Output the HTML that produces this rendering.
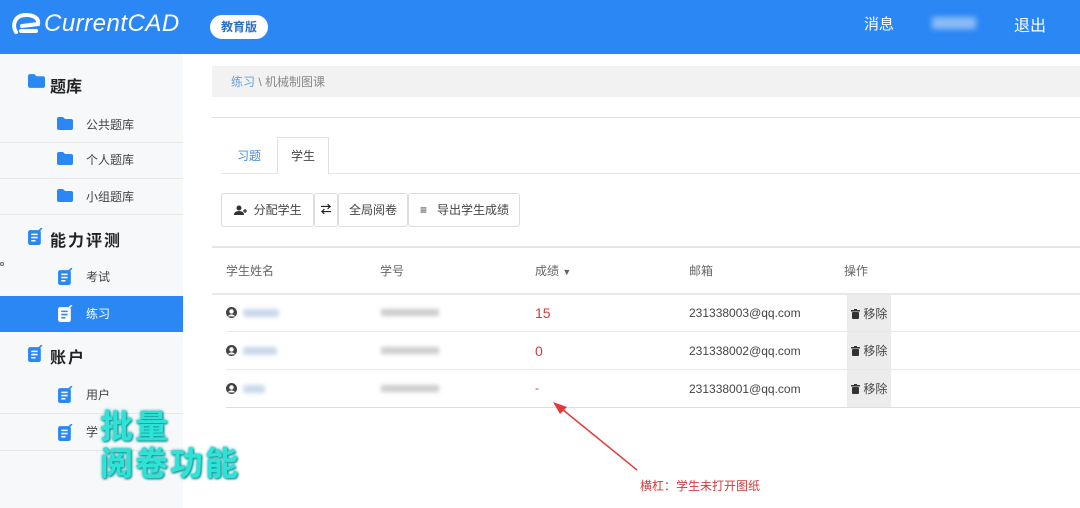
<!DOCTYPE html>
<html><head><meta charset="utf-8"><style>
*{margin:0;padding:0;box-sizing:border-box}
body{width:1080px;height:508px;overflow:hidden;background:#fff;font-family:"Liberation Sans","Noto Sans CJK SC",sans-serif;position:relative;color:#555}
.a{position:absolute;white-space:nowrap}
.hdr{position:absolute;left:0;top:0;width:1080px;height:54px;background:#2a87f4}
.side{position:absolute;left:0;top:54px;width:183px;height:454px;background:#f7f8fa}
.sh{font-size:16px;font-weight:bold;color:#222}
.si{font-size:12px;color:#444}
.ln{position:absolute;height:1px;background:#e8e8e8}
.btn{position:absolute;top:193px;height:34px;border:1px solid #ddd;border-radius:3px;font-size:12px;color:#444;line-height:32px;background:#fff}
.th{font-size:12px;color:#666}
.td{font-size:12px;color:#444}
.blur{position:absolute;height:8px;background:#c8d8ea;filter:blur(2px);border-radius:3px}
.gblur{position:absolute;height:7px;width:58px;background:#ccc;filter:blur(2px)}
.rm{position:absolute;left:847px;width:44px;height:38px;background:#ececec;font-size:12px;color:#444;line-height:38px;padding-left:4px}
.big{font-size:33px;font-weight:bold;color:#2ee3d6;text-shadow:0 0 3px #0aa,1px 1px 2px #077;letter-spacing:2px}
</style></head><body>
<div class="hdr"></div>
<svg class="a" style="left:12px;top:12px" width="30" height="24" viewBox="0 0 30 24"><path d="M4 20 C0 14 2 3 14 3 C24 3 27 8 26 12 L10 14 M9 19 L24 19" stroke="#fff" stroke-width="4" fill="none" stroke-linecap="round"/></svg>
<div class="a" style="left:44px;top:10px;font-size:24px;color:#fff;font-style:italic;letter-spacing:0.5px">CurrentCAD</div>
<div class="a" style="left:210px;top:15px;width:58px;height:24px;border-radius:12px;background:#fff;color:#2a6fc0;font-size:12px;font-weight:bold;text-align:center;line-height:24px">教育版</div>
<div class="a" style="left:864px;top:13px;font-size:15px;color:#fff">消息</div>
<div class="a" style="left:932px;top:17px;width:44px;height:12px;background:#8cbcf5;filter:blur(3px)"></div>
<div class="a" style="left:1014px;top:12px;font-size:16px;color:#fff">退出</div>

<div class="side"></div>
<div class="ln" style="left:0;top:142px;width:183px"></div>
<div class="ln" style="left:0;top:178px;width:183px"></div>
<div class="ln" style="left:0;top:214px;width:183px"></div>
<div class="ln" style="left:0;top:413px;width:183px"></div>
<div class="ln" style="left:0;top:450px;width:183px"></div>
<div class="a" style="left:0;top:296px;width:183px;height:36px;background:#2a87f4"></div>
<svg width="0" height="0" style="position:absolute"><defs>
<symbol id="fd" viewBox="0 0 16 13"><path d="M0 2 Q0 0 2 0 L6 0 L8 2 L14 2 Q16 2 16 4 L16 11 Q16 13 14 13 L2 13 Q0 13 0 11Z" fill="#2a87f4"/></symbol>
<symbol id="dc" viewBox="0 0 14 16"><rect x="0" y="2" width="12" height="14" rx="2" fill="#2a87f4"/><path d="M3 6h6M3 9h6M3 12h4" stroke="#fff" stroke-width="1.5"/><path d="M10 3 L13 0" stroke="#2a87f4" stroke-width="1.5"/></symbol>
<symbol id="dw" viewBox="0 0 14 16"><rect x="0" y="2" width="12" height="14" rx="2" fill="#fff"/><path d="M3 6h6M3 9h6M3 12h4" stroke="#2a87f4" stroke-width="1.5"/><path d="M10 3 L13 0" stroke="#fff" stroke-width="1.5"/></symbol>
<symbol id="av" viewBox="0 0 10 10"><circle cx="5" cy="5" r="5" fill="#444"/><circle cx="5" cy="4" r="2" fill="#fff"/><path d="M1.5 8.5 Q5 5 8.5 8.5" fill="#fff"/></symbol>
<symbol id="tr" viewBox="0 0 9 10"><rect x="0" y="1" width="9" height="1.5" fill="#333"/><rect x="3" y="0" width="3" height="1.5" fill="#333"/><rect x="1" y="3" width="7" height="7" rx="1" fill="#333"/></symbol>
</defs></svg>
<svg class="a" style="left:28px;top:74px;" width="17" height="14"><use href="#fd"/></svg>
<div class="a sh" style="left:50px;top:73px">题库</div>
<svg class="a" style="left:57px;top:117px" width="16" height="13"><use href="#fd"/></svg>
<div class="a si" style="left:86px;top:116px">公共题库</div>
<svg class="a" style="left:57px;top:152px" width="16" height="13"><use href="#fd"/></svg>
<div class="a si" style="left:86px;top:151px">个人题库</div>
<svg class="a" style="left:57px;top:189px" width="16" height="13"><use href="#fd"/></svg>
<div class="a si" style="left:86px;top:188px">小组题库</div>
<svg class="a" style="left:28px;top:228px" width="15" height="17"><use href="#dc"/></svg>
<div class="a sh" style="left:50px;top:227px;letter-spacing:2px">能力评测</div>
<div class="a" style="left:0;top:262px;width:4px;height:4px;border:1px solid #666;border-radius:50%"></div>
<svg class="a" style="left:58px;top:268px" width="15" height="17"><use href="#dc"/></svg>
<div class="a si" style="left:86px;top:268px">考试</div>
<svg class="a" style="left:58px;top:305px" width="15" height="17"><use href="#dw"/></svg>
<div class="a si" style="left:86px;top:305px;color:#fff">练习</div>
<svg class="a" style="left:28px;top:345px" width="15" height="17"><use href="#dc"/></svg>
<div class="a sh" style="left:50px;top:344px;letter-spacing:2px">账户</div>
<svg class="a" style="left:58px;top:386px" width="15" height="17"><use href="#dc"/></svg>
<div class="a si" style="left:86px;top:386px">用户</div>
<svg class="a" style="left:58px;top:424px" width="15" height="17"><use href="#dc"/></svg>
<div class="a si" style="left:86px;top:423px">学</div>
<div class="a big" style="left:100px;top:400px">批量</div>
<div class="a big" style="left:100px;top:437px">阅卷功能</div>

<div class="a" style="left:212px;top:66px;width:868px;height:31px;background:#f2f2f2"></div>
<div class="a" style="left:231px;top:73px;font-size:12px;color:#888"><span style="color:#6a9fd4">练习</span> \ 机械制图课</div>
<div class="ln" style="left:212px;top:117px;width:868px;background:#e0e0e0"></div>
<div class="ln" style="left:221px;top:173px;width:859px;background:#e6e6e6"></div>
<div class="a" style="left:237px;top:147px;font-size:12px;color:#4a8bd0">习题</div>
<div class="a" style="left:277px;top:137px;width:52px;height:37px;border:1px solid #e0e0e0;border-bottom:none;background:#fff;font-size:12px;color:#444;text-align:center;line-height:36px">学生</div>
<div class="btn" style="left:221px;width:93px;padding-left:12px">
<svg width="13" height="10" style="vertical-align:-1px"><circle cx="5" cy="3" r="2.5" fill="#333"/><path d="M0 10 Q0 6 5 6 Q10 6 10 10Z" fill="#333"/><path d="M9 6h4M11 4v4" stroke="#333" stroke-width="1.3"/></svg>&nbsp; 分配学生</div>
<div class="btn" style="left:314px;width:24px;text-align:center;font-size:11px;color:#222;font-weight:bold">⇄</div>
<div class="btn" style="left:338px;width:70px;text-align:center">全局阅卷</div>
<div class="btn" style="left:408px;width:112px;padding-left:11px"><b style="color:#333">≡</b>&nbsp;&nbsp; 导出学生成绩</div>

<div class="ln" style="left:212px;top:246px;width:868px;background:#e6e6e6;height:2px"></div>
<div class="a th" style="left:226px;top:262px">学生姓名</div>
<div class="a th" style="left:380px;top:262px">学号</div>
<div class="a th" style="left:535px;top:262px">成绩 <span style="font-size:9px">▼</span></div>
<div class="a th" style="left:689px;top:262px">邮箱</div>
<div class="a th" style="left:844px;top:262px">操作</div>
<div class="ln" style="left:212px;top:293px;width:868px;height:2px;background:#e8e8e8"></div>
<div class="rm" style="top:295px"><svg width="9" height="10" style="vertical-align:-1px"><use href="#tr"/></svg> 移除</div>
<div class="rm" style="top:332px"><svg width="9" height="10" style="vertical-align:-1px"><use href="#tr"/></svg> 移除</div>
<div class="rm" style="top:370px"><svg width="9" height="10" style="vertical-align:-1px"><use href="#tr"/></svg> 移除</div>
<div class="ln" style="left:226px;top:331px;width:854px"></div>
<div class="ln" style="left:226px;top:369px;width:854px"></div>
<div class="ln" style="left:226px;top:407px;width:854px;background:#ddd"></div>

<svg class="a" style="left:226px;top:307px" width="11" height="11"><use href="#av"/></svg><div class="blur" style="left:243px;top:309px;width:36px"></div>
<svg class="a" style="left:226px;top:345px" width="11" height="11"><use href="#av"/></svg><div class="blur" style="left:243px;top:347px;width:34px"></div>
<svg class="a" style="left:226px;top:383px" width="11" height="11"><use href="#av"/></svg><div class="blur" style="left:243px;top:385px;width:22px"></div>
<div class="gblur" style="left:381px;top:309px"></div>
<div class="gblur" style="left:381px;top:347px"></div>
<div class="gblur" style="left:381px;top:385px"></div>
<div class="a" style="left:535px;top:305px;font-size:14px;color:#d03b3b">15</div>
<div class="a" style="left:535px;top:343px;font-size:14px;color:#d03b3b">0</div>
<div class="a" style="left:535px;top:381px;font-size:12px;color:#d03b3b">-</div>
<div class="a td" style="left:689px;top:306px">231338003@qq.com</div>
<div class="a td" style="left:689px;top:344px">231338002@qq.com</div>
<div class="a td" style="left:689px;top:382px">231338001@qq.com</div>

<svg class="a" style="left:540px;top:395px" width="110" height="85"><path d="M97 75 L17 10" stroke="#e23a3a" stroke-width="1.5"/><path d="M13 7 L27 12 L20 19Z" fill="#e23a3a"/></svg>
<div class="a" style="left:640px;top:477px;font-size:12px;color:#d03b3b">横杠：学生未打开图纸</div>
</body></html>
